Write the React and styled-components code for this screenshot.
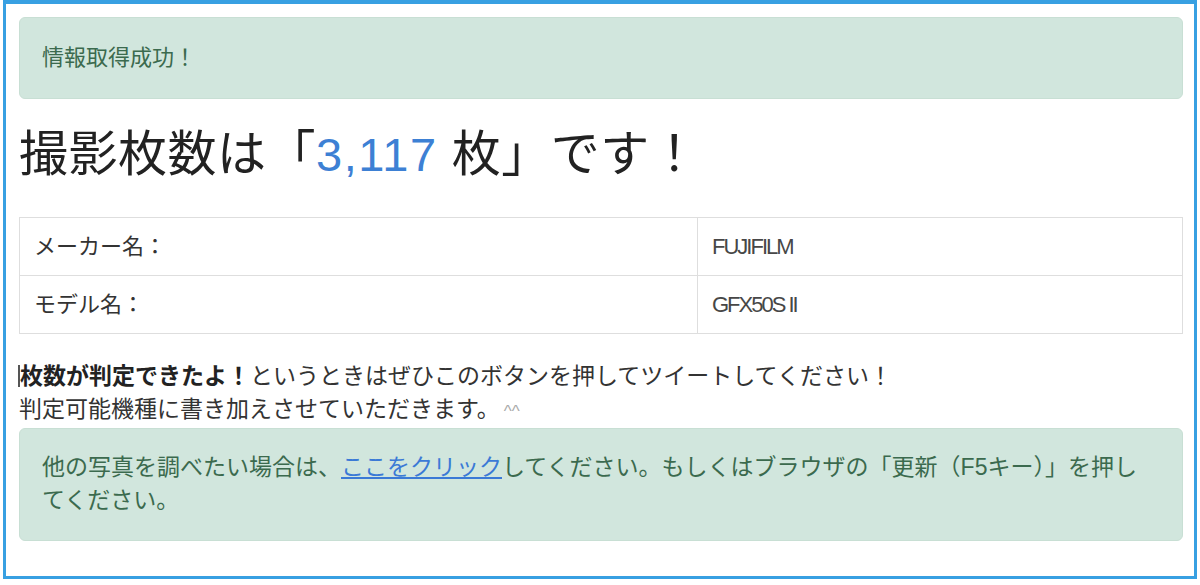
import React from 'react';
import styled, { createGlobalStyle } from 'styled-components';

const GlobalStyle = createGlobalStyle`
  html, body {
    margin: 0;
    padding: 0;
    background: #fff;
  }
  body {
    font-family: "Liberation Sans", "Noto Sans CJK JP", sans-serif;
    color: #333;
  }
`;

const Frame = styled.div`
  box-sizing: border-box;
  width: 1194px;
  height: 579px;
  margin-left: 3px;
  border: 3px solid #38a0e2;
  border-top-width: 4px;
  padding: 13px 11px 0 13px;
  overflow: hidden;
`;

const Alert = styled.div`
  box-sizing: border-box;
  background: #d1e6dd;
  border: 1px solid #c8dfd4;
  border-radius: 6px;
  color: #3b6a4e;
  font-size: ${({ $size }) => $size || 22}px;
  line-height: 33px;
  padding: ${({ $tall }) => ($tall ? '22px 34px 23px 22px' : '23px 22px 24px')};
  margin-bottom: ${({ $gap }) => $gap || 0}px;
`;

const Link = styled.a`
  color: #3b7ad6;
  text-decoration: underline;
  cursor: pointer;
`;

const Heading = styled.h1`
  margin: 0 0 36px;
  font-size: 49px;
  font-weight: normal;
  line-height: 53px;
  color: #222;
  letter-spacing: 0.5px;
`;

const Count = styled.span`
  color: #3d80d4;
  font-size: 47px;
  letter-spacing: 1.5px;
`;

const Table = styled.table`
  width: 100%;
  border-collapse: collapse;
  margin-bottom: 26px;
`;

const Cell = styled.td`
  border: 1px solid #dedede;
  padding: 12px 13px 12px 14px;
  font-size: 22px;
  line-height: 33px;
  color: #333;
  width: ${({ $w }) => ($w ? `${$w}px` : 'auto')};
`;

const Value = styled.span`
  font-family: "Liberation Sans", sans-serif;
  font-size: 22px;
  letter-spacing: -2px;
  color: #474747;
`;

const Note = styled.p`
  margin: 0;
  font-size: 23px;
  line-height: 33px;
  color: #333;
`;

const Caret = styled.span`
  display: inline-block;
  width: 2px;
  height: 22px;
  background: #555;
  margin-left: -1px;
  vertical-align: -3px;
`;

const Strong = styled.b`
  font-weight: bold;
  color: #222;
`;

const Faint = styled.span`
  color: #aaa;
  font-size: 17px;
  margin-left: 4px;
`;

const rows = [
  { label: 'メーカー名：', value: 'FUJIFILM' },
  { label: 'モデル名：', value: 'GFX50S II' },
];

const App = () => (
  <>
    <GlobalStyle />
    <Frame>
      <Alert $gap={29}>情報取得成功！</Alert>
      <Heading>
        撮影枚数は「<Count>3,117</Count> 枚」です！
      </Heading>
      <Table>
        <tbody>
          {rows.map(({ label, value }) => (
            <tr key={label}>
              <Cell $w={650}>{label}</Cell>
              <Cell>
                <Value>{value}</Value>
              </Cell>
            </tr>
          ))}
        </tbody>
      </Table>
      <Note>
        <Caret />
        <Strong>枚数が判定できたよ！</Strong>というときはぜひこのボタンを押してツイートしてください！
        <br />
        判定可能機種に書き加えさせていただきます。<Faint>^^</Faint>
      </Note>
      <Alert $tall $size={23}>
        他の写真を調べたい場合は、<Link>ここをクリック</Link>してください。もしくはブラウザの「更新（F5キー）」を押してください。
      </Alert>
    </Frame>
  </>
);

export default App;
